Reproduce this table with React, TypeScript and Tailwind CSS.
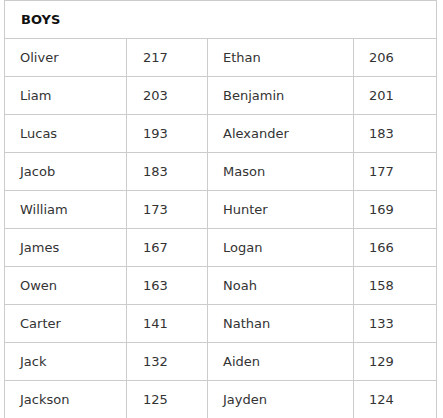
const rows: [string, number, string, number][] = [
  ["Oliver", 217, "Ethan", 206],
  ["Liam", 203, "Benjamin", 201],
  ["Lucas", 193, "Alexander", 183],
  ["Jacob", 183, "Mason", 177],
  ["William", 173, "Hunter", 169],
  ["James", 167, "Logan", 166],
  ["Owen", 163, "Noah", 158],
  ["Carter", 141, "Nathan", 133],
  ["Jack", 132, "Aiden", 129],
  ["Jackson", 125, "Jayden", 124],
];

export default function App() {
  const cell = "border border-[#cccccc] h-[38px] px-[15px] text-left align-middle";
  return (
    <div className="bg-white min-h-screen pl-[4px] text-[13px] text-[#333333] font-['DejaVu_Sans',Verdana,sans-serif]">
      <table className="w-[432px] table-fixed border-collapse">
        <colgroup>
          <col className="w-[122px]" />
          <col className="w-[81px]" />
          <col className="w-[146px]" />
          <col className="w-[83px]" />
        </colgroup>
        <thead>
          <tr>
            <th colSpan={4} className={cell + " font-bold uppercase text-[#111111] pl-[16px]"}>
              Boys
            </th>
          </tr>
        </thead>
        <tbody>
          {rows.map((r) => (
            <tr key={r[0]}>
              <td className={cell}>{r[0]}</td>
              <td className={cell + " pl-[16px]"}>{r[1]}</td>
              <td className={cell}>{r[2]}</td>
              <td className={cell}>{r[3]}</td>
            </tr>
          ))}
        </tbody>
      </table>
    </div>
  );
}
